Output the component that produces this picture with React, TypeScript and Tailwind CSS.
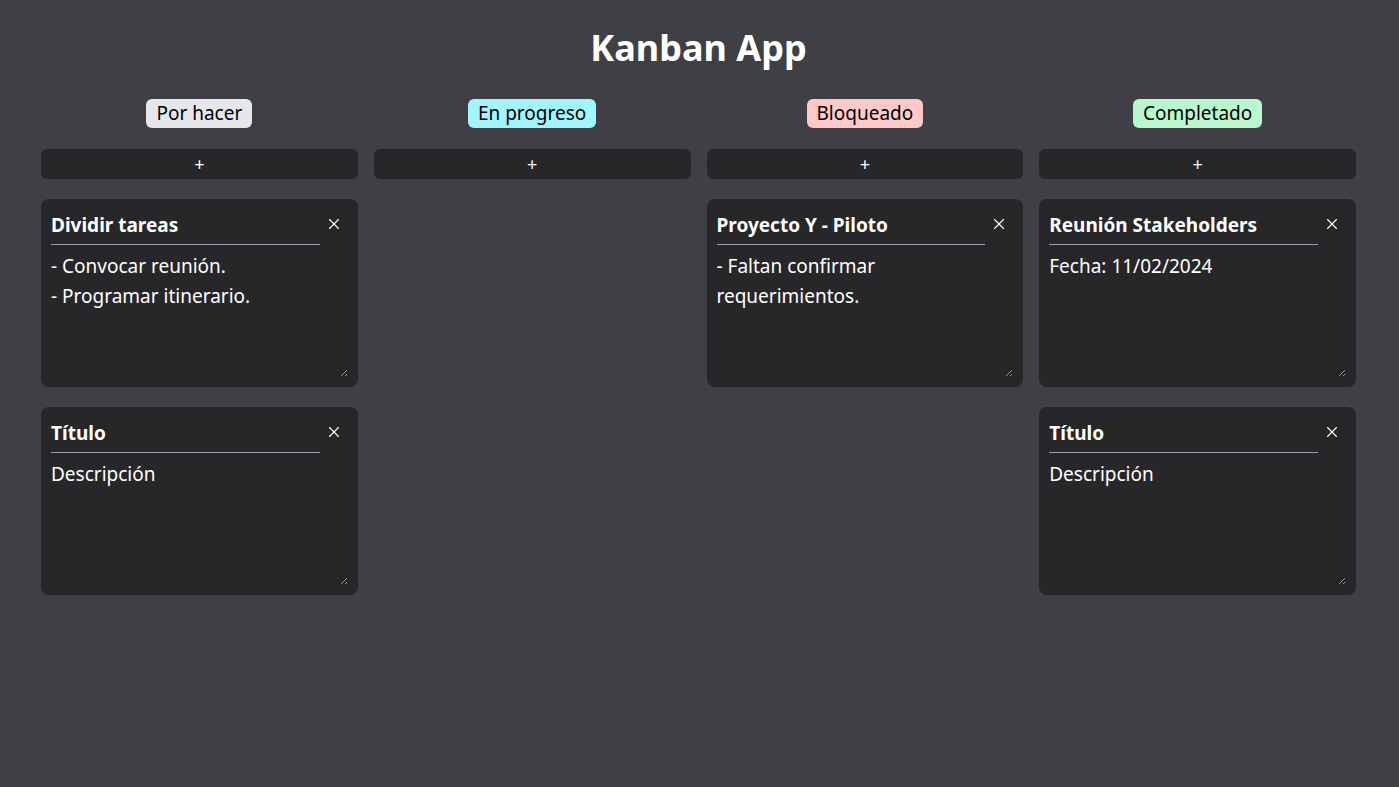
import { X } from "lucide-react";

type Task = { id: number; title: string; description: string };
type Column = { name: string; badge: string; tasks: Task[] };

const COLUMNS: Column[] = [
  {
    name: "Por hacer",
    badge: "bg-gray-200",
    tasks: [
      { id: 1, title: "Dividir tareas", description: "- Convocar reunión.\n- Programar itinerario." },
      { id: 2, title: "Título", description: "Descripción" },
    ],
  },
  { name: "En progreso", badge: "bg-cyan-200", tasks: [] },
  {
    name: "Bloqueado",
    badge: "bg-red-200",
    tasks: [{ id: 3, title: "Proyecto Y - Piloto", description: "- Faltan confirmar requerimientos." }],
  },
  {
    name: "Completado",
    badge: "bg-green-200",
    tasks: [
      { id: 4, title: "Reunión Stakeholders", description: "Fecha: 11/02/2024" },
      { id: 5, title: "Título", description: "Descripción" },
    ],
  },
];

// Tarjeta de tarea con título editable y descripción.
function TaskCard({ task }: { task: Task }) {
  return (
    <div className="rounded-lg bg-[#27272a] p-2.5">
      <div className="flex items-start">
        <input
          defaultValue={task.title}
          className="min-w-0 flex-1 border-b border-gray-400 bg-transparent pt-0.5 pb-[5px] text-[19px] leading-7 font-bold text-white outline-none"
        />
        <button className="mt-1.5 flex w-7 justify-center text-white">
          <X className="h-[18px] w-[18px]" strokeWidth={1.5} />
        </button>
      </div>
      <textarea
        defaultValue={task.description}
        className="mt-1.5 block h-[126px] w-full bg-transparent text-[19px] leading-[30px] text-white outline-none"
      />
    </div>
  );
}

export default function App() {
  return (
    <div className="min-h-screen bg-[#3f3f46] pt-5 pr-[43px] pl-[41px] text-white [font-family:'Noto_Sans',sans-serif]">
      <h1 className="text-center text-4xl leading-[56px] font-bold">Kanban App</h1>
      <div className="mt-[23px] grid grid-cols-4 gap-4">
        {COLUMNS.map((column) => (
          <div key={column.name} className="flex flex-col">
            <div className="flex justify-center">
              <span className={`${column.badge} rounded-md px-2.5 text-[19px] leading-[29px] text-black`}>{column.name}</span>
            </div>
            <button className="mt-[21px] h-[30px] rounded-md bg-[#27272a] text-lg leading-none text-white">+</button>
            <div className="mt-5 flex flex-col gap-5">
              {column.tasks.map((task) => (
                <TaskCard key={task.id} task={task} />
              ))}
            </div>
          </div>
        ))}
      </div>
    </div>
  );
}
